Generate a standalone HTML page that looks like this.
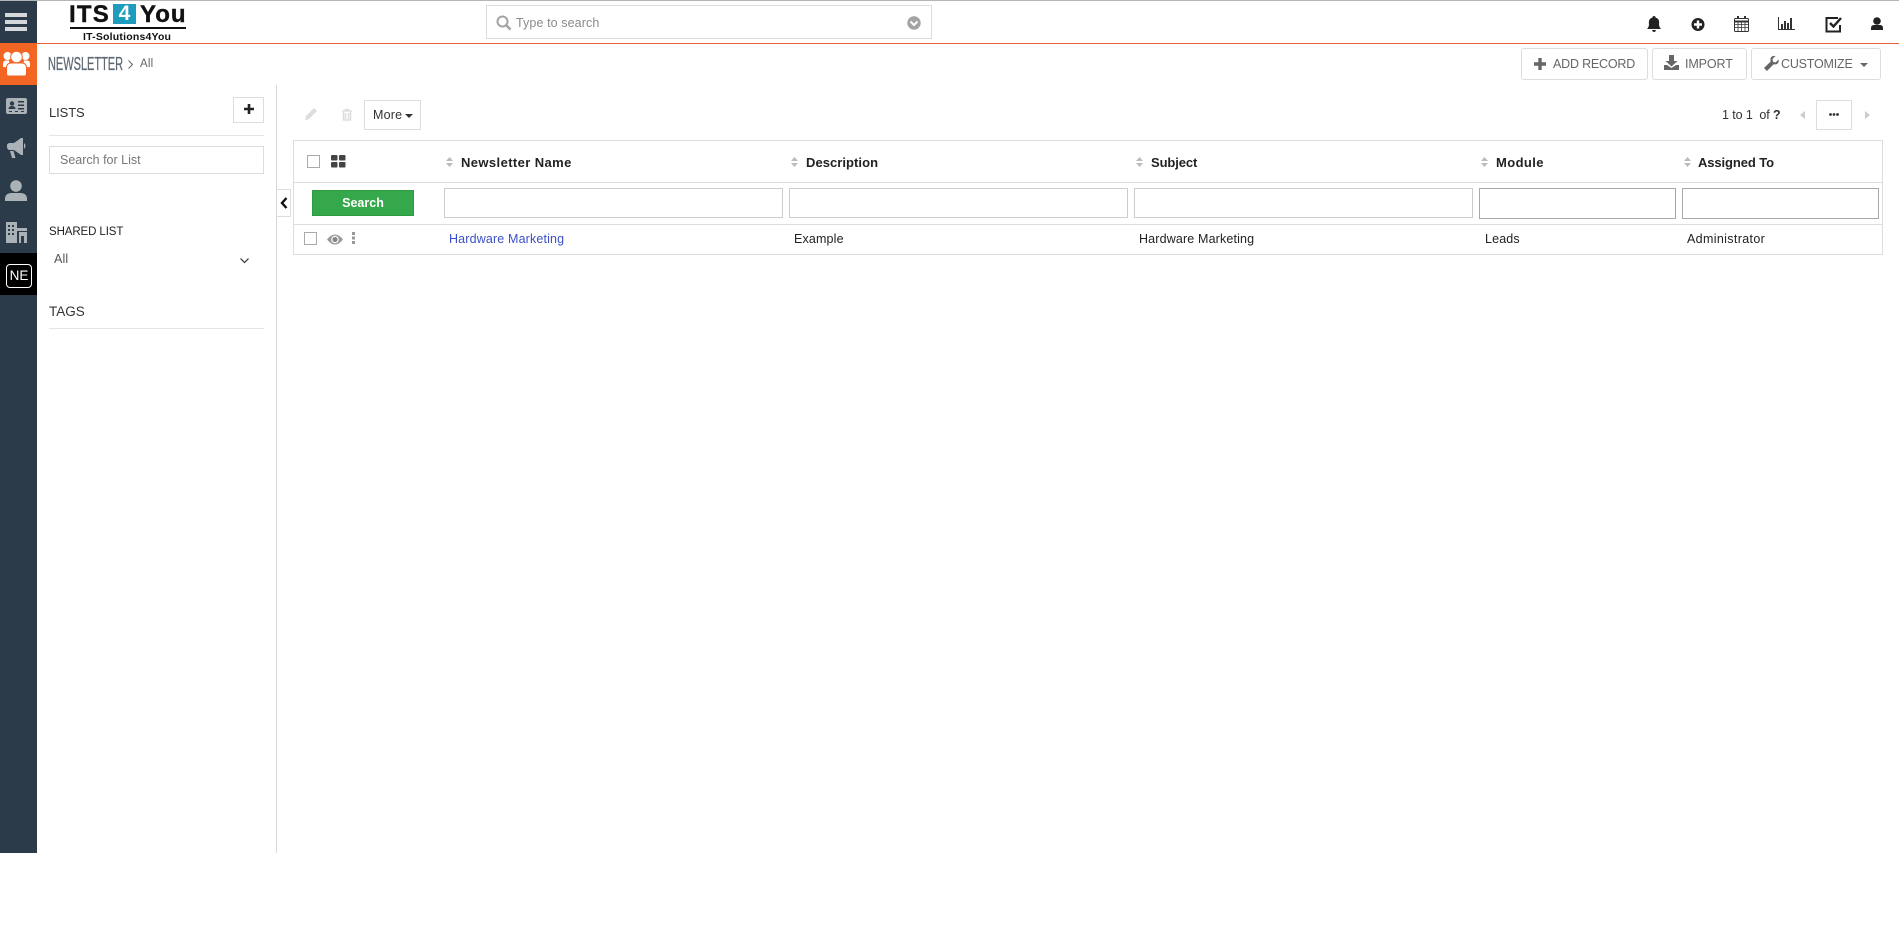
<!DOCTYPE html>
<html><head><meta charset="utf-8"><style>
html,body{margin:0;padding:0;background:#fff;width:1899px;height:944px;overflow:hidden}
body{position:relative;font-family:"Liberation Sans",sans-serif;font-size:12.5px;color:#222}
.a{position:absolute;box-sizing:border-box}
.t{position:absolute;white-space:nowrap;line-height:16px;letter-spacing:.15px}
.h{font-weight:bold;font-size:13px;color:#222;letter-spacing:.4px}
.b{position:absolute;box-sizing:border-box;border:1px solid #ddd;background:#fff}
svg{position:absolute;overflow:visible}
</style></head><body>
<div class="a" style="left:0;top:0;width:1899px;height:1px;background:#b5b5b5"></div>
<div class="a" style="left:37px;top:43px;width:1862px;height:1px;background:#e4613a"></div>
<div class="a" style="left:0;top:1px;width:37px;height:852px;background:#2c3b49"></div>
<div class="a" style="left:0;top:43px;width:37px;height:42px;background:#f26522"></div>
<div class="a" style="left:0;top:253px;width:37px;height:42px;background:#000"></div>
<div class="a" style="left:5px;top:13px;width:22px;height:4px;background:#d5d8da"></div>
<div class="a" style="left:5px;top:20px;width:22px;height:4px;background:#d5d8da"></div>
<div class="a" style="left:5px;top:27px;width:22px;height:4px;background:#d5d8da"></div>

<svg style="left:0;top:43px" width="37" height="42" fill="#fff"><circle cx="7.500" cy="13" r="4"/><circle cx="25.500" cy="13" r="4"/><path d="M3 24v-3q0-3.500 3-3.500h3l1 7zM30 24v-3q0-3.500-3-3.500h-3l-1 7z"/><circle cx="16.500" cy="14" r="5.800" stroke="#f26522"/><path d="M7.500 33q-1-1-1-3v-5q0-5 5-5h10q5 0 5 5v5q0 2-1 3z" stroke="#f26522"/></svg>
<svg style="left:6px;top:98px" width="21" height="17" fill="#aab1b7"><rect width="21" height="16" rx="2"/><g fill="#2c3b49"><circle cx="6" cy="5.500" r="2.200"/><path d="M2.500 11q0-3 3.500-3t3.500 3z"/><rect x="12" y="3" width="6" height="1.500"/><rect x="12" y="6.500" width="6" height="1.500"/><rect x="12" y="10" width="6" height="1.500"/><rect x="3" y="13" width="3" height="1"/><rect x="9" y="13" width="3" height="1"/><rect x="15" y="13" width="3" height="1"/></g></svg>
<svg style="left:6px;top:137px" width="21" height="22" fill="#aab1b7"><path d="M15 1h2v17h-2L8 13H3q-2-1-2-3V8q0-1 2-2h5zM18 6q3 2.500 0 6zM4 14h3.500l2 7H6z"/></svg>
<svg style="left:5px;top:180px" width="22" height="21" fill="#aab1b7"><circle cx="11" cy="6" r="5.800"/><path d="M0 21v-2q0-6 7-6h8q7 0 7 6v2z"/></svg>
<svg style="left:5px;top:221px" width="22" height="22" fill="#aab1b7"><path d="M1 1h11v21H1z"/><path d="M12 7h10v3H12zM14 11h8v11h-3v-7h-3v7h-2z"/><g fill="#2c3b49"><rect x="3" y="4" width="2" height="2"/><rect x="7" y="4" width="2" height="2"/><rect x="3" y="8" width="2" height="2"/><rect x="7" y="8" width="2" height="2"/><rect x="3" y="12" width="2" height="2"/><rect x="7" y="12" width="2" height="2"/></g></svg>
<div class="a" style="left:6px;top:264px;width:26px;height:24px;border:1px solid #fff;border-radius:4px;color:#fff;font-size:13.500px;line-height:22px;text-align:center">NE</div>

<div class="t" style="left:69px;top:0;font-size:24px;line-height:30px;font-weight:bold;color:#111;letter-spacing:1.2px;-webkit-text-stroke:.4px #111">ITS</div>
<div class="a" style="left:113px;top:4px;width:23px;height:20px;background:#1d9cbd;color:#fff;font-weight:bold;font-size:21px;line-height:20px;text-align:center">4</div>
<div class="t" style="left:140px;top:0;font-size:24px;line-height:30px;font-weight:bold;color:#111;letter-spacing:1px;-webkit-text-stroke:.4px #111">You</div>
<div class="a" style="left:70px;top:27px;width:116px;height:2px;background:#111"></div>
<div class="t" style="left:83px;top:29px;font-size:10.500px;font-weight:bold;color:#111;letter-spacing:.2px">IT-Solutions4You</div>

<div class="b" style="left:486px;top:5px;width:446px;height:34px;border-color:#ddd"></div>
<svg style="left:496px;top:15px" width="16" height="15" fill="none" stroke="#a3a3a3" stroke-width="2"><circle cx="6.500" cy="6.500" r="5"/><path d="M10 10l4.500 4.500" stroke-width="2.500"/></svg>
<div class="t" style="left:516px;top:15px;color:#8a8a8a;font-size:12.500px;letter-spacing:.1px">Type to search</div>
<svg style="left:907px;top:16px" width="14" height="14"><circle cx="7" cy="7" r="6.700" fill="#a3a3a3"/><path d="M3.500 5.500L7 9l3.500-3.500" fill="none" stroke="#fff" stroke-width="2"/></svg>

<svg style="left:1647px;top:16px" width="14" height="16" fill="#222"><path d="M7 0q1.500 0 1.500 1.500Q13 3 12 8q0 3 2 5H0q2-2 2-5Q1 3 5.500 1.500 5.500 0 7 0zM5 14h4q-.500 2-2 2t-2-2z"/></svg>
<svg style="left:1691px;top:18px" width="14" height="14"><circle cx="7" cy="6.500" r="6.500" fill="#222"/><path d="M3 6.500h8M7 2.500v8" stroke="#fff" stroke-width="2.400"/></svg>
<svg style="left:1734px;top:16px" width="15" height="16" fill="none" stroke="#333"><rect x=".5" y="2.500" width="14" height="13" rx="1"/><path d="M1 5.500h13" stroke-width="2"/><path d="M1 8.500h13M1 11.500h13M4 6v9M7.500 6v9M11 6v9" stroke-width=".8"/><path d="M4 0v3M11 0v3" stroke-width="2"/></svg>
<svg style="left:1778px;top:16px" width="17" height="15" fill="#333"><path d="M0 13h17v1H0z"/><path d="M0 1h1v13H0z"/><rect x="3" y="8" width="2" height="5"/><rect x="6" y="5" width="2" height="8"/><rect x="9" y="7" width="2" height="6"/><rect x="12" y="2" width="2" height="11"/></svg>
<svg style="left:1825px;top:16px" width="18" height="17" fill="none" stroke="#222" stroke-width="2"><path d="M15 9v6.500H1.500V2H13"/><path d="M5 7l3.500 3.500L16 2" stroke-width="2.400"/></svg>
<svg style="left:1871px;top:17px" width="12" height="14" fill="#222"><circle cx="6" cy="4" r="3.800"/><path d="M0 13v-2q0-3 3-3h6q3 0 3 3v2z"/></svg>

<div class="t" style="left:48px;top:53px;font-size:18px;line-height:22px;color:#5d6974;transform:scaleX(.61);transform-origin:0 0;letter-spacing:0;-webkit-text-stroke:.3px #5d6974">NEWSLETTER</div>
<svg style="left:128px;top:60px" width="6" height="9" fill="none" stroke="#666"><path d="M.5.500l4 4-4 4"/></svg>
<div class="t" style="left:140px;top:56px;font-size:11.500px;color:#666;letter-spacing:.2px">All</div>

<div class="b" style="left:1521px;top:48px;width:127px;height:32px;border-radius:3px"></div>
<div class="b" style="left:1652px;top:48px;width:95px;height:32px;border-radius:3px"></div>
<div class="b" style="left:1751px;top:48px;width:130px;height:32px;border-radius:3px"></div>
<svg style="left:1534px;top:58px" width="12" height="12"><path d="M6 0v12M0 6h12" stroke="#666" stroke-width="3.400"/></svg>
<div class="t" style="left:1553px;top:56px;font-size:12.500px;color:#666;letter-spacing:-.2px">ADD RECORD</div>
<svg style="left:1664px;top:55px" width="15" height="15" fill="#666"><path d="M5 0h5v6h3.500L7.500 11.500 1.500 6H5zM0 10h3l4.500 3 4.500-3h3v5H0z"/></svg>
<div class="t" style="left:1685px;top:56px;font-size:12.500px;color:#666;letter-spacing:-.1px">IMPORT</div>
<svg style="left:1764px;top:56px" width="15" height="15" fill="#666"><path d="M14.500 3.500l-3 3-2.500-.7L8.500 3l3-3q-4-.5-5 2.500-.3 1.500.2 3L0 12l3 3 6.700-6.700q3.500.7 4.800-2 .4-1.500 0-2.800z"/></svg>
<div class="t" style="left:1781px;top:56px;font-size:12.500px;color:#666;letter-spacing:-.2px">CUSTOMIZE</div>
<svg style="left:1860px;top:63px" width="8" height="5"><path d="M0 0h8L4 4z" fill="#666"/></svg>

<div class="a" style="left:276px;top:85px;width:1px;height:768px;background:#d9d9d9"></div>

<div class="t" style="left:49px;top:105px;font-size:13px;color:#333;letter-spacing:-.1px">LISTS</div>
<div class="b" style="left:233px;top:97px;width:31px;height:26px"></div>
<svg style="left:244px;top:104px" width="10" height="10"><path d="M5 0v10M0 5h10" stroke="#222" stroke-width="2.600"/></svg>
<div class="a" style="left:49px;top:135px;width:215px;height:1px;background:#e6e6e6"></div>
<div class="b" style="left:49px;top:146px;width:215px;height:28px"></div>
<div class="t" style="left:60px;top:152px;color:#777;font-size:12.500px;letter-spacing:0">Search for List</div>
<div class="t" style="left:49px;top:224px;font-size:11.500px;color:#222;letter-spacing:-.1px">SHARED LIST</div>
<div class="t" style="left:54px;top:251px;font-size:12.500px;color:#555">All</div>
<svg style="left:240px;top:258px" width="9" height="6" fill="none" stroke="#333" stroke-width="1.200"><path d="M.5.500L4.500 4.500 8.500.500"/></svg>
<div class="t" style="left:49px;top:304px;font-size:13.500px;color:#333;letter-spacing:0">TAGS</div>
<div class="a" style="left:49px;top:328px;width:215px;height:1px;background:#e6e6e6"></div>

<div class="b" style="left:277px;top:189px;width:14px;height:28px;border-color:#ddd;border-left:0"></div>
<svg style="left:280px;top:197px" width="8" height="12" fill="none" stroke="#111" stroke-width="2.400"><path d="M6.500 1L2 6l4.500 5"/></svg>

<svg style="left:305px;top:108px" width="12" height="13" fill="#ddd"><path d="M9 0l3 3-8 8-4 1.500L1 8z"/></svg>
<svg style="left:342px;top:109px" width="10" height="12" fill="none" stroke="#ddd" stroke-width="1.500"><path d="M1.500 3v8h7V3M0 2h10M3.500 1.500v-1h3v1M3.500 4v6M6.500 4v6"/></svg>
<div class="b" style="left:364px;top:100px;width:57px;height:30px"></div>
<div class="t" style="left:373px;top:107px;color:#333;font-size:12.500px;letter-spacing:.2px">More</div>
<svg style="left:405px;top:114px" width="8" height="4"><path d="M0 0h8L4 4z" fill="#333"/></svg>

<div class="t" style="left:1722px;top:107px;color:#333;font-size:12.500px;letter-spacing:-.1px">1 to 1&nbsp; of <b>?</b></div>
<svg style="left:1800px;top:111px" width="5" height="8"><path d="M5 0v8L0 4z" fill="#ccc"/></svg>
<div class="b" style="left:1816px;top:100px;width:36px;height:30px"></div>
<svg style="left:1829px;top:113px" width="10" height="3" fill="#333"><circle cx="1.500" cy="1.500" r="1.400"/><circle cx="5" cy="1.500" r="1.400"/><circle cx="8.500" cy="1.500" r="1.400"/></svg>
<svg style="left:1865px;top:111px" width="5" height="8"><path d="M0 0v8l5-4z" fill="#ccc"/></svg>

<div class="b" style="left:293px;top:140px;width:1590px;height:115px;border-color:#ddd"></div>
<div class="a" style="left:294px;top:182px;width:1588px;height:1px;background:#ddd"></div>
<div class="a" style="left:294px;top:224px;width:1588px;height:1px;background:#ddd"></div>

<div class="b" style="left:307px;top:155px;width:13px;height:13px;border-color:#aaa"></div>
<svg style="left:331px;top:155px" width="15" height="13" fill="#444"><rect width="6.500" height="5.500" rx="1"/><rect x="8" width="6.500" height="5.500" rx="1"/><rect y="7" width="6.500" height="5.500" rx="1"/><rect x="8" y="7" width="6.500" height="5.500" rx="1"/></svg>

<svg style="left:446px;top:157px" width="7" height="10" fill="#bbb"><path d="M3.500 0L7 4H0zM0 6h7L3.500 10z"/></svg>
<div class="t h" style="left:461px;top:155px">Newsletter Name</div>
<svg style="left:791px;top:157px" width="7" height="10" fill="#bbb"><path d="M3.500 0L7 4H0zM0 6h7L3.500 10z"/></svg>
<div class="t h" style="left:806px;top:155px;letter-spacing:.05px">Description</div>
<svg style="left:1136px;top:157px" width="7" height="10" fill="#bbb"><path d="M3.500 0L7 4H0zM0 6h7L3.500 10z"/></svg>
<div class="t h" style="left:1151px;top:155px;letter-spacing:-.1px">Subject</div>
<svg style="left:1481px;top:157px" width="7" height="10" fill="#bbb"><path d="M3.500 0L7 4H0zM0 6h7L3.500 10z"/></svg>
<div class="t h" style="left:1496px;top:155px">Module</div>
<svg style="left:1684px;top:157px" width="7" height="10" fill="#bbb"><path d="M3.500 0L7 4H0zM0 6h7L3.500 10z"/></svg>
<div class="t h" style="left:1698px;top:155px;letter-spacing:-.1px">Assigned To</div>

<div class="a" style="left:312px;top:190px;width:102px;height:26px;background:#34a84a;border:1px solid #2f9a43;color:#fff;font-weight:bold;font-size:12.500px;line-height:24px;text-align:center;letter-spacing:0">Search</div>
<div class="b" style="left:444px;top:188px;width:339px;height:30px;border-color:#ccc"></div>
<div class="b" style="left:789px;top:188px;width:339px;height:30px;border-color:#ccc"></div>
<div class="b" style="left:1134px;top:188px;width:339px;height:30px;border-color:#ccc"></div>
<div class="b" style="left:1479px;top:188px;width:197px;height:31px;border-color:#a8a8a8"></div>
<div class="b" style="left:1682px;top:188px;width:197px;height:31px;border-color:#a8a8a8"></div>

<div class="b" style="left:304px;top:232px;width:13px;height:13px;border-color:#aaa"></div>
<svg style="left:327px;top:234px" width="16" height="11"><path d="M0 5.500Q8-4.500 16 5.500 8 15.500 0 5.500z" fill="#999"/><circle cx="8" cy="5.500" r="3.800" fill="#fff"/><circle cx="8" cy="5.500" r="2.600" fill="#888"/></svg>
<svg style="left:352px;top:232px" width="3" height="12" fill="#999"><rect width="3" height="3"/><rect y="4.500" width="3" height="3"/><rect y="9" width="3" height="3"/></svg>
<div class="t" style="left:449px;top:231px;color:#3b50c8">Hardware Marketing</div>
<div class="t" style="left:794px;top:231px">Example</div>
<div class="t" style="left:1139px;top:231px">Hardware Marketing</div>
<div class="t" style="left:1485px;top:231px">Leads</div>
<div class="t" style="left:1687px;top:231px;letter-spacing:.35px">Administrator</div>
</body></html>
